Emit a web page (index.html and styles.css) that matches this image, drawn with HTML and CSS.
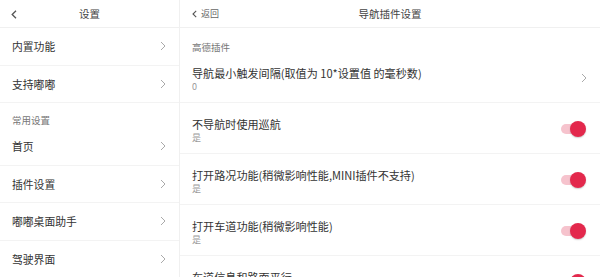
FILE: index.html
```html
<!DOCTYPE html>
<html lang="zh">
<head>
<meta charset="utf-8">
<link rel="stylesheet" href="styles.css">
</head>
<body>
<div class="app">
  <div class="side">
    <div class="head">
      <svg class="back" width="6" height="9" viewBox="0 0 6 9"><polyline points="5,0.8 1.2,4.5 5,8.2" fill="none" stroke="#555" stroke-width="1.3"/></svg>
      <span class="head-title">设置</span>
    </div>
    <div class="srow"><span>内置功能</span><svg class="chev" width="6" height="10" viewBox="0 0 6 10"><polyline points="1,1 5,5 1,9" fill="none" stroke="#aaa" stroke-width="1"/></svg></div>
    <div class="srow"><span>支持嘟嘟</span><svg class="chev" width="6" height="10" viewBox="0 0 6 10"><polyline points="1,1 5,5 1,9" fill="none" stroke="#aaa" stroke-width="1"/></svg></div>
    <div class="ssec">常用设置</div>
    <div class="srow"><span>首页</span><svg class="chev" width="6" height="10" viewBox="0 0 6 10"><polyline points="1,1 5,5 1,9" fill="none" stroke="#aaa" stroke-width="1"/></svg></div>
    <div class="srow"><span>插件设置</span><svg class="chev" width="6" height="10" viewBox="0 0 6 10"><polyline points="1,1 5,5 1,9" fill="none" stroke="#aaa" stroke-width="1"/></svg></div>
    <div class="srow"><span>嘟嘟桌面助手</span><svg class="chev" width="6" height="10" viewBox="0 0 6 10"><polyline points="1,1 5,5 1,9" fill="none" stroke="#aaa" stroke-width="1"/></svg></div>
    <div class="srow"><span>驾驶界面</span><svg class="chev" width="6" height="10" viewBox="0 0 6 10"><polyline points="1,1 5,5 1,9" fill="none" stroke="#aaa" stroke-width="1"/></svg></div>
  </div>
  <div class="main">
    <div class="head mhead">
      <div class="ret"><svg width="5" height="8" viewBox="0 0 5 8"><polyline points="4.2,0.8 1,4 4.2,7.2" fill="none" stroke="#555" stroke-width="1.1"/></svg><span>返回</span></div>
      <span class="head-title">导航插件设置</span>
    </div>
    <div class="msec">高德插件</div>
    <div class="mrow">
      <div class="txt"><div class="t">导航最小触发间隔(取值为 10*设置值 的毫秒数)</div><div class="s">0</div></div>
      <svg class="chev" width="6" height="10" viewBox="0 0 6 10"><polyline points="1,1 5,5 1,9" fill="none" stroke="#aaa" stroke-width="1"/></svg>
    </div>
    <div class="mrow">
      <div class="txt"><div class="t">不导航时使用巡航</div><div class="s">是</div></div>
      <div class="tog"><div class="knob"></div></div>
    </div>
    <div class="mrow">
      <div class="txt"><div class="t">打开路况功能(稍微影响性能,MINI插件不支持)</div><div class="s">是</div></div>
      <div class="tog"><div class="knob"></div></div>
    </div>
    <div class="mrow">
      <div class="txt"><div class="t">打开车道功能(稍微影响性能)</div><div class="s">是</div></div>
      <div class="tog"><div class="knob"></div></div>
    </div>
    <div class="mrow">
      <div class="txt"><div class="t">车道信息和路面平行</div><div class="s">是</div></div>
      <div class="tog"><div class="knob"></div></div>
    </div>
  </div>
</div>
</body>
</html>
```
FILE: styles.css
```css
* { box-sizing: border-box; }
html, body { margin: 0; padding: 0; background: #fff; }
body {
  width: 600px; height: 277px; overflow: hidden;
  font-family: "Noto Sans CJK SC", "Noto Sans", sans-serif;
  color: #333;
}
.app { display: flex; height: 277px; }
.side { width: 180px; border-right: 1px solid #f0f0f0; flex: none; }
.main { flex: 1; min-width: 0; }
.head {
  height: 28px; border-bottom: 1px solid #f0f0f0;
  display: flex; align-items: center; justify-content: center;
  position: relative; font-size: 10.5px; color: #444;
}
.back { position: absolute; left: 11px; top: 10px; }
.head-title { line-height: 14px; }
.ret {
  position: absolute; left: 12px; top: 0; height: 27px;
  display: flex; align-items: center; gap: 4px;
  font-size: 9px; color: #666;
}
.srow {
  height: 37.5px; border-bottom: 1px solid #f3f3f3;
  display: flex; align-items: center; justify-content: space-between;
  padding: 0 13px 0 12px; font-size: 10.8px; color: #333;
}
.ssec {
  height: 25px; padding: 11px 12px 0; font-size: 9.5px; color: #777; line-height: 12px;
}
.msec {
  height: 24px; padding: 13px 12px 0; font-size: 9.5px; color: #777; line-height: 12px;
}
.mrow {
  height: 51px; border-bottom: 1px solid #f3f3f3;
  display: flex; align-items: flex-start; justify-content: space-between;
  padding: 0 13px 0 12px;
}
.txt { padding-top: 14px; }
.t { font-size: 11.1px; line-height: 14px; color: #333; white-space: nowrap; }
.s { font-size: 9px; line-height: 13px; color: #999; }
.mrow .chev { margin-top: 21px; }
.tog {
  margin-top: 21px; width: 21px; height: 10px; border-radius: 5px;
  background: #f6c3cd; position: relative; margin-right: 5px;
}
.knob {
  position: absolute; right: -4px; top: -3px; width: 16px; height: 16px;
  border-radius: 50%; background: #e3284c;
  box-shadow: 0 1px 1.5px rgba(0,0,0,0.2);
}
```
